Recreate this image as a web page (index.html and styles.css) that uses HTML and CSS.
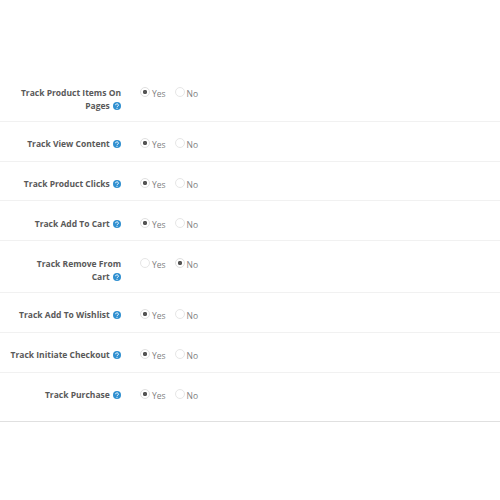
FILE: index.html
```html
<!DOCTYPE html>
<html lang="en">
<head>
<meta charset="utf-8">
<title>Tracking settings</title>
<link rel="stylesheet" href="styles.css">
</head>
<body>
<svg class="defs" width="0" height="0" aria-hidden="true"><symbol id="help" viewBox="0 0 10 10"><circle cx="5" cy="5" r="5" fill="#2f8fd0"/><path d="M3.3 4a1.7 1.7 0 1 1 2.6 1.4c-.6.3-.9.5-.9 1" fill="none" stroke="#fff" stroke-width="1.2"/><circle cx="5" cy="7.9" r=".7" fill="#fff"/></symbol></svg>
<main class="panel">
  <div class="row tall"><div class="label">Track Product Items On Pages <svg class="help"><use href="#help"/></svg></div><div class="options"><span class="radio on"></span><span class="opt">Yes</span><span class="radio"></span><span class="opt">No</span></div></div>
  <div class="row"><div class="label">Track View Content <svg class="help"><use href="#help"/></svg></div><div class="options"><span class="radio on"></span><span class="opt">Yes</span><span class="radio"></span><span class="opt">No</span></div></div>
  <div class="row short"><div class="label">Track Product Clicks <svg class="help"><use href="#help"/></svg></div><div class="options"><span class="radio on"></span><span class="opt">Yes</span><span class="radio"></span><span class="opt">No</span></div></div>
  <div class="row low"><div class="label">Track Add To Cart <svg class="help"><use href="#help"/></svg></div><div class="options"><span class="radio on"></span><span class="opt">Yes</span><span class="radio"></span><span class="opt">No</span></div></div>
  <div class="row tall"><div class="label">Track Remove From <span class="keep">Cart <svg class="help"><use href="#help"/></svg></span></div><div class="options"><span class="radio"></span><span class="opt">Yes</span><span class="radio on"></span><span class="opt">No</span></div></div>
  <div class="row"><div class="label">Track Add To Wishlist <svg class="help"><use href="#help"/></svg></div><div class="options"><span class="radio on"></span><span class="opt">Yes</span><span class="radio"></span><span class="opt">No</span></div></div>
  <div class="row"><div class="label">Track Initiate Checkout <svg class="help"><use href="#help"/></svg></div><div class="options"><span class="radio on"></span><span class="opt">Yes</span><span class="radio"></span><span class="opt">No</span></div></div>
  <div class="row last"><div class="label">Track Purchase <svg class="help"><use href="#help"/></svg></div><div class="options"><span class="radio on"></span><span class="opt">Yes</span><span class="radio"></span><span class="opt">No</span></div></div>
</main>
</body>
</html>
```
FILE: styles.css
```css
html, body {
  margin: 0;
  padding: 0;
  background: #fff;
}
body {
  padding-top: 70px;
  font-family: "Open Sans", "Liberation Sans", sans-serif;
  font-size: 8.5px;
  color: #666;
}
.defs {
  position: absolute;
}
.panel {
  background: #fff;
  border-bottom: 1px solid #e0e0e0;
  box-shadow: 0 4px 0 #f5f5f5;
}
.row {
  box-sizing: border-box;
  display: flex;
  align-items: flex-start;
  height: 40px;
  padding-top: 15px;
  border-bottom: 1px solid #f1f1f1;
}
.row.short {
  height: 39px;
}
.row.low {
  padding-top: 16px;
}
.row.tall {
  height: 52px;
  padding-top: 16px;
}
.row.last {
  height: 48px;
  border-bottom: 0;
}
.label {
  box-sizing: border-box;
  width: 121px;
  padding-left: 9px;
  text-align: right;
  font-weight: 700;
  line-height: 13px;
  color: #595959;
}
.keep {
  white-space: nowrap;
}
.help {
  width: 8px;
  height: 8px;
  margin-left: 1px;
  vertical-align: -1px;
}
.options {
  display: flex;
  align-items: center;
  margin-top: 1px;
  margin-left: 19px;
  height: 12px;
}
.radio {
  box-sizing: border-box;
  width: 10px;
  height: 10px;
  border: 1px solid #e6e6e6;
  border-radius: 50%;
  background: #fff;
  position: relative;
  top: -1px;
}
.radio.on {
  background: radial-gradient(circle, #555 0 1.8px, #fff 2.5px);
  border-color: #e0e0e0;
}
.opt {
  margin-left: 2px;
  margin-right: 9px;
  color: #808080;
  font-size: 8.5px;
}
```
